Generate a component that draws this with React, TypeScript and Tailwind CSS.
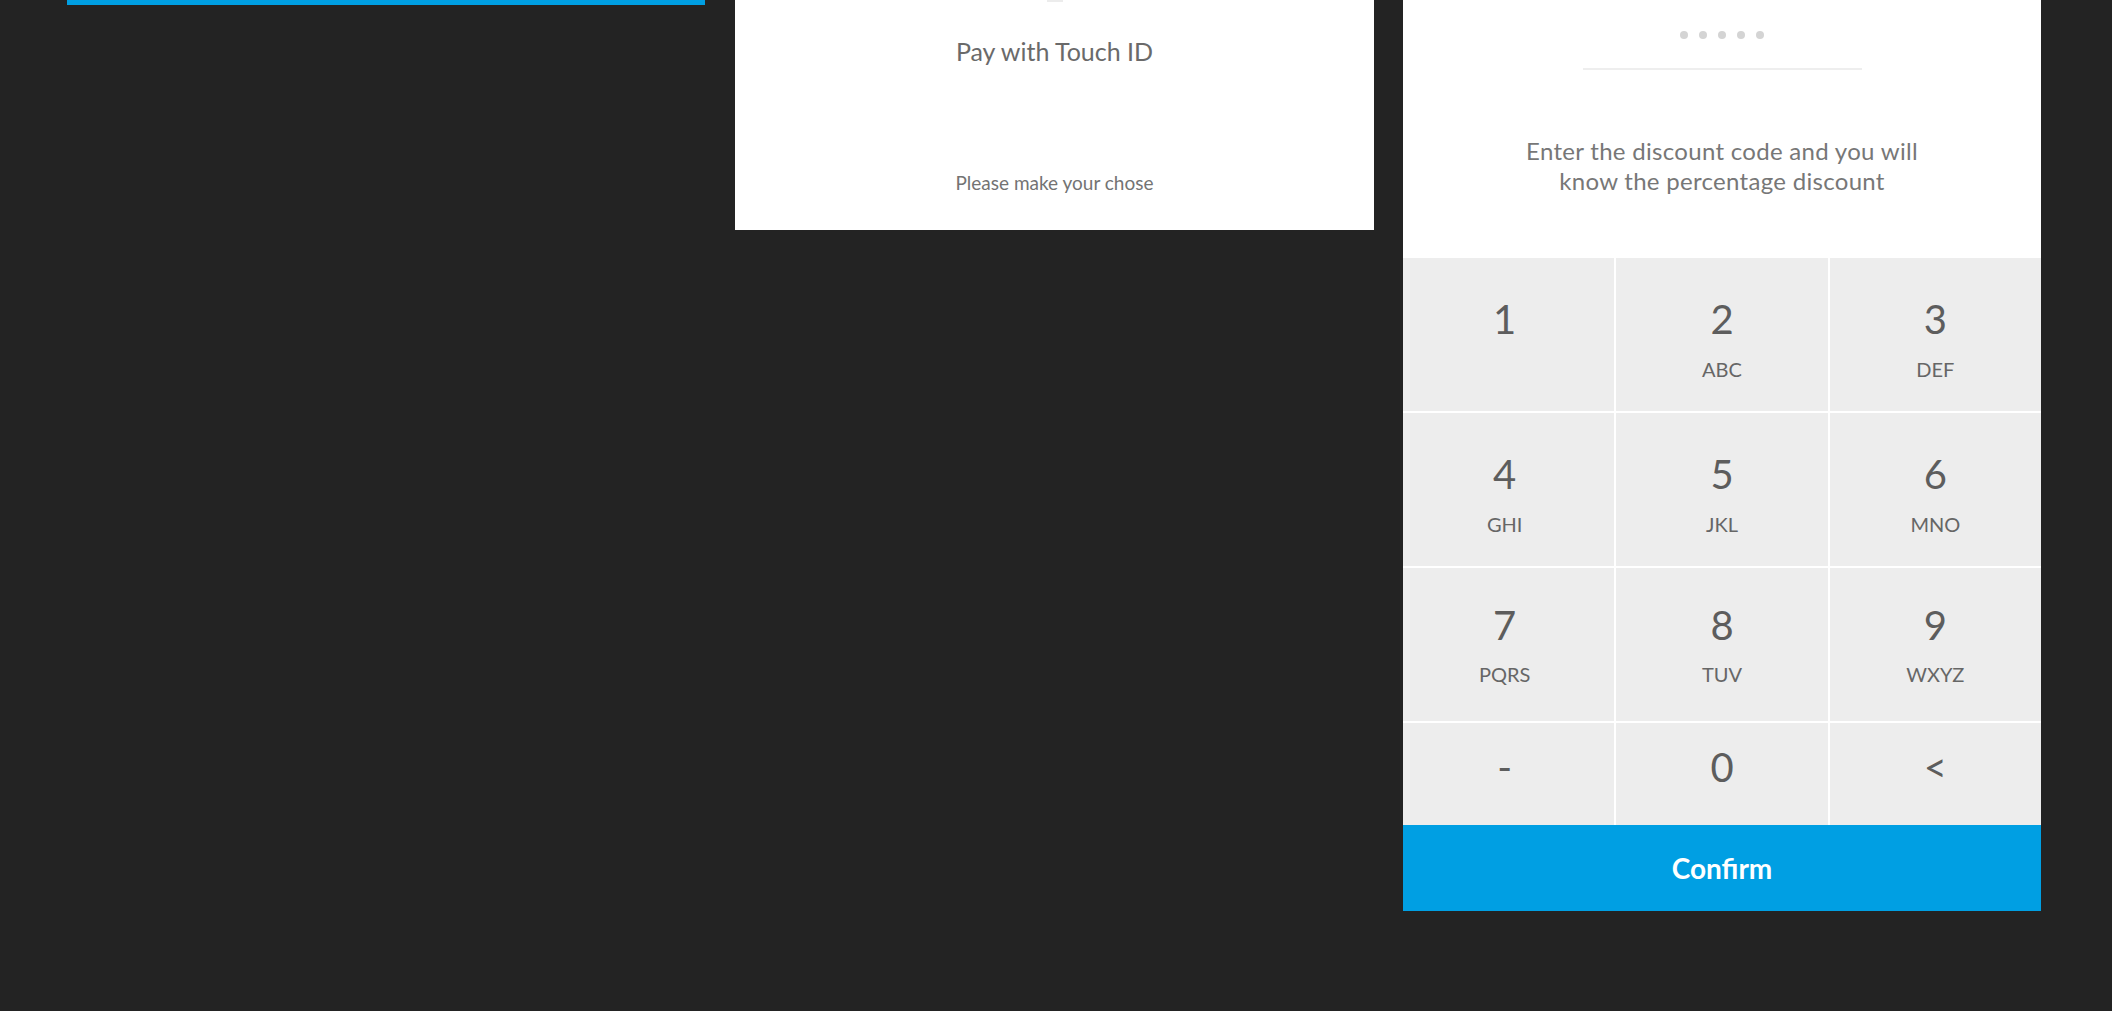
import React from 'react';

// keypad layout: digit + letters, last row is shorter
const keys = [
  { d: '1', l: '', row: 0 },
  { d: '2', l: 'ABC', row: 0 },
  { d: '3', l: 'DEF', row: 0 },
  { d: '4', l: 'GHI', row: 1 },
  { d: '5', l: 'JKL', row: 1 },
  { d: '6', l: 'MNO', row: 1 },
  { d: '7', l: 'PQRS', row: 2 },
  { d: '8', l: 'TUV', row: 2 },
  { d: '9', l: 'WXYZ', row: 2 },
];

const bottomKeys = ['-', '0', '<'];

function PayPanel() {
  return (
    <div className="ml-[30px] w-[639px] h-[230px] bg-white flex flex-col items-center">
      <div className="w-[16px] h-[2px] bg-[#ececec]" />
      <p className="mt-[34px] text-[25px] leading-[30px] text-[#6a6a6a]">Pay with Touch ID</p>
      <p className="mt-[106px] text-[19px] leading-[22px] text-[#737373]">Please make your chose</p>
    </div>
  );
}

function DiscountPanel() {
  return (
    <div className="ml-[29px] w-[638px] flex flex-col">
      <div className="h-[258px] bg-white flex flex-col items-center">
        <div className="mt-[31px] flex gap-[11px]">
          {[0, 1, 2, 3, 4].map((i) => (
            <span key={i} className="w-[8px] h-[8px] rounded-full bg-[#d4d4d4]" />
          ))}
        </div>
        <div className="mt-[29px] w-[279px] h-[2px] bg-[#eeeeee]" />
        <p className="mt-[66px] text-center text-[24px] leading-[30px] tracking-[0.3px] text-[#777777]">
          Enter the discount code and you will
          <br />
          know the percentage discount
        </p>
      </div>

      <div className="grid grid-cols-3 gap-[2px] bg-white">
        {keys.map((k, i) => (
          <div
            key={k.d}
            className={`h-[153px] bg-[#ededed] flex flex-col items-center ${k.row === 2 ? 'pt-[37px]' : 'pt-[41px]'} ${i % 3 === 0 ? 'pr-[8px]' : ''}`}
          >
            <span className="text-[40px] leading-[40px] text-[#5d5d5d]">{k.d}</span>
            {k.l && (
              <span className={`${k.row === 2 ? 'mt-[19px]' : 'mt-[20px]'} text-[20px] leading-[20px] text-[#666666]`}>
                {k.l}
              </span>
            )}
          </div>
        ))}
        {bottomKeys.map((k, i) => (
          <div
            key={k}
            className={`h-[102px] bg-[#ededed] flex flex-col items-center pt-[24px] ${i === 0 ? 'pr-[8px]' : ''}`}
          >
            <span className="text-[40px] leading-[40px] text-[#5d5d5d]">{k}</span>
          </div>
        ))}
      </div>

      <button className="h-[86px] bg-[#009fe3] text-white text-[28px] font-bold flex items-center justify-center">
        Confirm
      </button>
    </div>
  );
}

export default function App() {
  return (
    <div className="w-[2112px] h-[1011px] bg-[#232323] flex items-start font-['Lato',sans-serif] overflow-hidden">
      <div className="ml-[67px] w-[638px] h-[5px] bg-[#009fe3]" />
      <PayPanel />
      <DiscountPanel />
    </div>
  );
}
